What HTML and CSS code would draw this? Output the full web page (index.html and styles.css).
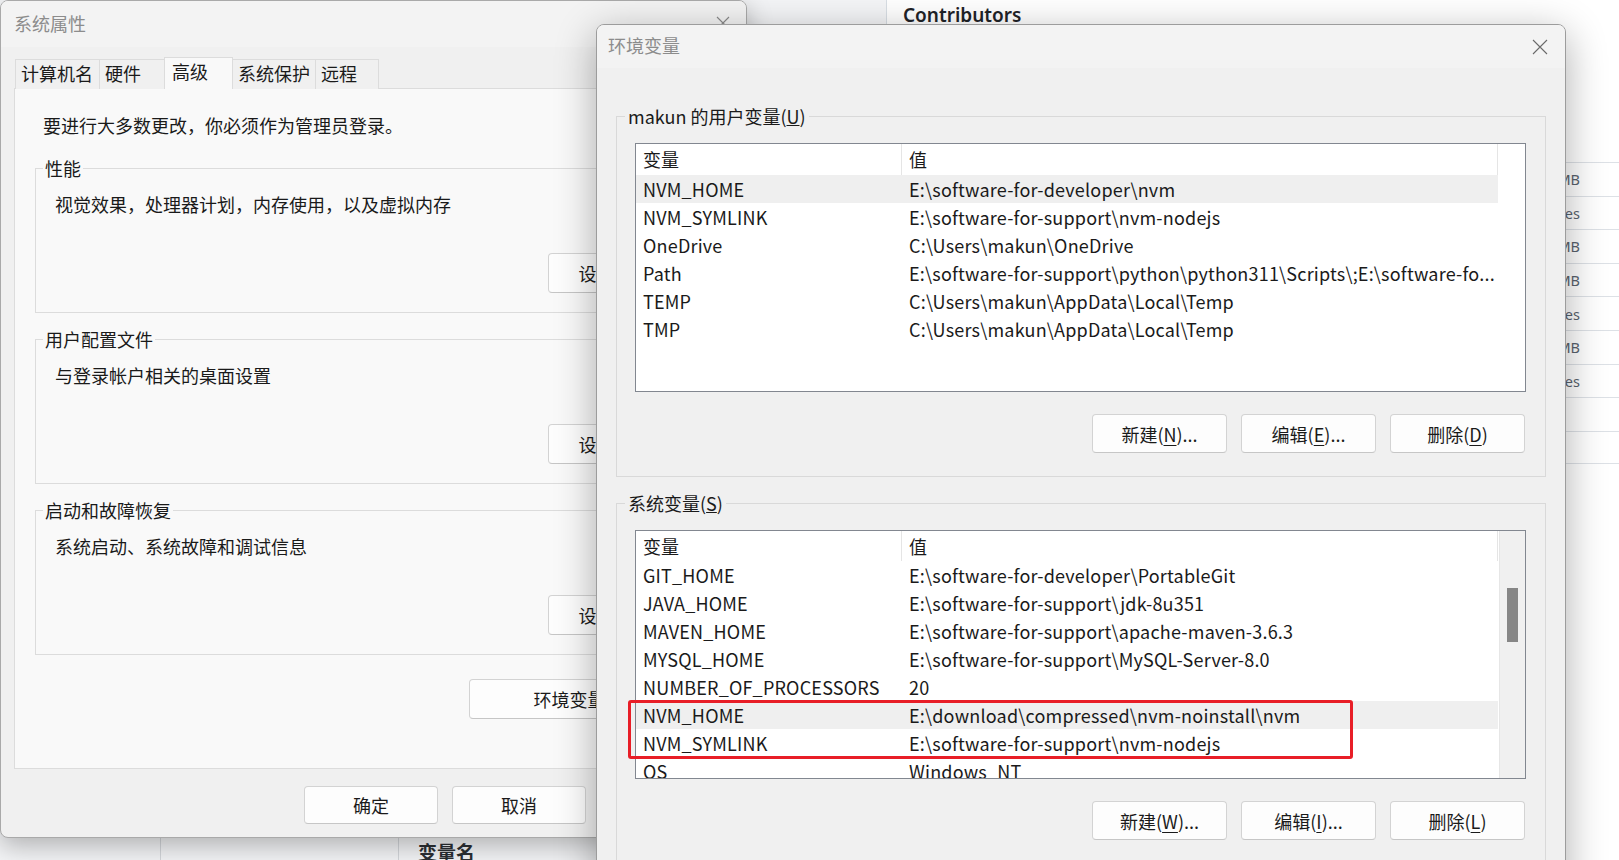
FILE: index.html
```html
<!DOCTYPE html>
<html lang="zh-CN">
<head>
<meta charset="utf-8">
<title>环境变量</title>
<link rel="stylesheet" href="styles.css">
</head>
<body>
<div class="bg">
  <div class="bg-main">
    <div class="thead">
      <div class="th th-1"></div>
      <div class="th th-2"></div>
      <div class="th th-3">变量名</div>
    </div>
  </div>
  <div class="bg-side">
    <h2 class="side-title">Contributors</h2>
    <div class="files">
      <div class="file-row">12.4 MB</div>
      <div class="file-row">812 bytes</div>
      <div class="file-row">3.1 MB</div>
      <div class="file-row">45.8 MB</div>
      <div class="file-row">276 bytes</div>
      <div class="file-row">7.9 MB</div>
      <div class="file-row">530 bytes</div>
      <div class="file-row"></div>
      <div class="file-row"></div>
    </div>
  </div>
</div>

<div class="win win-sys">
  <div class="titlebar">
    <span class="title">系统属性</span>
    <svg class="close" width="14" height="14" viewBox="0 0 14 14"><path d="M1 1 L13 13 M13 1 L1 13" stroke="#8a8a8a" stroke-width="1.1" fill="none"/></svg>
  </div>
  <div class="sys-body">
    <div class="tabs">
      <div class="tab tab-w1">计算机名</div>
      <div class="tab tab-w2">硬件</div>
      <div class="tab tab-w3 active">高级</div>
      <div class="tab tab-w4">系统保护</div>
      <div class="tab tab-w5">远程</div>
    </div>
    <div class="tabpanel">
      <p class="notice">要进行大多数更改，你必须作为管理员登录。</p>
      <div class="group">
        <span class="legend">性能</span>
        <p class="desc">视觉效果，处理器计划，内存使用，以及虚拟内存</p>
        <button class="btn btn-set">设置(<u>S</u>)...</button>
      </div>
      <div class="group">
        <span class="legend">用户配置文件</span>
        <p class="desc">与登录帐户相关的桌面设置</p>
        <button class="btn btn-set">设置(<u>E</u>)...</button>
      </div>
      <div class="group">
        <span class="legend">启动和故障恢复</span>
        <p class="desc">系统启动、系统故障和调试信息</p>
        <button class="btn btn-set">设置(<u>T</u>)...</button>
      </div>
      <div class="env-row">
        <button class="btn btn-env">环境变量(<u>N</u>)...</button>
      </div>
    </div>
    <div class="dlg-buttons">
      <button class="btn btn-dlg">确定</button>
      <button class="btn btn-dlg">取消</button>
      <button class="btn btn-dlg">应用(<u>A</u>)</button>
    </div>
  </div>
</div>

<div class="win win-env">
  <div class="titlebar env-titlebar">
    <span class="title">环境变量</span>
    <svg class="close" width="16" height="16" viewBox="0 0 16 16"><path d="M1 1 L15 15 M15 1 L1 15" stroke="#6a6a6a" stroke-width="1.1" fill="none"/></svg>
  </div>
  <div class="env-body">
    <div class="egroup">
      <span class="legend elegend">makun 的用户变量(<u>U</u>)</span>
      <div class="lv lv-user">
        <div class="lv-main">
          <div class="lv-head">
            <div class="hc c1">变量</div>
            <div class="hc c2">值</div>
          </div>
          <div class="lv-rows">
            <div class="row sel"><div class="c c1">NVM_HOME</div><div class="c c2">E:\software-for-developer\nvm</div></div>
            <div class="row"><div class="c c1">NVM_SYMLINK</div><div class="c c2">E:\software-for-support\nvm-nodejs</div></div>
            <div class="row"><div class="c c1">OneDrive</div><div class="c c2">C:\Users\makun\OneDrive</div></div>
            <div class="row"><div class="c c1">Path</div><div class="c c2">E:\software-for-support\python\python311\Scripts\;E:\software-fo...</div></div>
            <div class="row"><div class="c c1">TEMP</div><div class="c c2">C:\Users\makun\AppData\Local\Temp</div></div>
            <div class="row"><div class="c c1">TMP</div><div class="c c2">C:\Users\makun\AppData\Local\Temp</div></div>
          </div>
        </div>
      </div>
      <div class="ebuttons">
        <button class="btn btn-env2">新建(<u>N</u>)...</button>
        <button class="btn btn-env2">编辑(<u>E</u>)...</button>
        <button class="btn btn-env2">删除(<u>D</u>)</button>
      </div>
    </div>

    <div class="egroup egroup-sys">
      <span class="legend elegend">系统变量(<u>S</u>)</span>
      <div class="lv lv-sys">
        <div class="lv-main">
          <div class="lv-head">
            <div class="hc c1">变量</div>
            <div class="hc c2">值</div>
          </div>
          <div class="lv-rows">
            <div class="row"><div class="c c1">GIT_HOME</div><div class="c c2">E:\software-for-developer\PortableGit</div></div>
            <div class="row"><div class="c c1">JAVA_HOME</div><div class="c c2">E:\software-for-support\jdk-8u351</div></div>
            <div class="row"><div class="c c1">MAVEN_HOME</div><div class="c c2">E:\software-for-support\apache-maven-3.6.3</div></div>
            <div class="row"><div class="c c1">MYSQL_HOME</div><div class="c c2">E:\software-for-support\MySQL-Server-8.0</div></div>
            <div class="row"><div class="c c1">NUMBER_OF_PROCESSORS</div><div class="c c2">20</div></div>
            <div class="row sel"><div class="c c1">NVM_HOME</div><div class="c c2">E:\download\compressed\nvm-noinstall\nvm</div></div>
            <div class="row"><div class="c c1">NVM_SYMLINK</div><div class="c c2">E:\software-for-support\nvm-nodejs</div></div>
            <div class="row"><div class="c c1">OS</div><div class="c c2">Windows_NT</div></div>
          </div>
        </div>
        <div class="vscroll"><div class="thumb"></div></div>
        <div class="mark"></div>
      </div>
      <div class="ebuttons">
        <button class="btn btn-env2">新建(<u>W</u>)...</button>
        <button class="btn btn-env2">编辑(<u>I</u>)...</button>
        <button class="btn btn-env2">删除(<u>L</u>)</button>
      </div>
    </div>
  </div>
</div>
</body>
</html>
```

FILE: styles.css
```css
* { box-sizing: border-box; }

body {
  margin: 0;
  width: 1619px;
  height: 860px;
  overflow: hidden;
  position: relative;
  background: #ffffff;
  font-family: "Noto Sans CJK SC", "Microsoft YaHei", sans-serif;
  font-size: 18px;
  color: #1a1a1a;
}

/* ---------- background page ---------- */
.bg {
  display: flex;
  height: 880px;
}
.bg-main {
  width: 886px;
  display: flex;
  flex-direction: column;
  justify-content: flex-end;
  background: #f4f5f7;
}
.thead {
  height: 50px;
  display: flex;
  background: #f3f4f6;
}
.th {
  height: 100%;
  border-right: 1px solid #d3d6da;
  padding: 10px 0 0 19px;
  font-weight: 700;
  font-size: 19px;
  line-height: 24px;
  color: #2b2f33;
}
.th-1 { width: 161px; }
.th-2 { width: 238px; }
.th-3 { flex: 1; border-right: none; }

.bg-side {
  flex: 1;
  border-left: 1px solid #d8dee4;
  padding-left: 16px;
  background: #fff;
}
.side-title {
  margin: 0;
  font-family: "Noto Sans", sans-serif;
  font-weight: 600;
  font-size: 19px;
  line-height: 30px;
  color: #1f2328;
}
.files {
  margin-top: 132px;
}
.file-row {
  height: 33.6px;
  border-top: 1px solid #dde1e6;
  display: flex;
  align-items: center;
  justify-content: flex-end;
  padding-right: 39px;
  font-family: "Noto Sans", sans-serif;
  font-size: 14.5px;
  color: #59636e;
}
.file-row:last-child { border-bottom: 1px solid #dde1e6; }

/* ---------- windows ---------- */
.win {
  position: absolute;
  border: 1px solid #a9a9a9;
  border-radius: 8px;
  background: #f0f0f0;
  overflow: hidden;
}
.win-sys {
  left: 0;
  top: 0;
  width: 747px;
  height: 838px;
  box-shadow: 0 8px 26px rgba(0, 0, 0, 0.28);
}
.win-env {
  left: 596px;
  top: 24px;
  width: 970px;
  height: 900px;
  border-color: #9c9c9c;
  box-shadow: 0 10px 40px rgba(0, 0, 0, 0.32);
}

.titlebar {
  height: 46px;
  background: #f3f3f3;
  display: flex;
  align-items: center;
  justify-content: space-between;
  padding: 0 16px 0 13px;
}
.title {
  color: #8c8c8c;
  line-height: 44px;
  margin-top: -2px;
}
.close { display: block; margin-top: -3px; }
.env-titlebar {
  height: 43px;
  padding: 0 17px 0 11px;
}
.env-titlebar .title { line-height: 41px; }
.env-titlebar .close { margin-top: 0; }

/* ---------- system properties ---------- */
.sys-body {
  padding: 10px 12px 0 13px;
}
.tabs {
  display: flex;
  align-items: flex-end;
  height: 32px;
  padding-left: 1px;
  position: relative;
  z-index: 1;
  margin-bottom: -1px;
}
.tab {
  height: 30px;
  padding-left: 5px;
  line-height: 27px;
  border: 1px solid #dcdcdc;
  border-bottom: none;
  margin-right: -1px;
  background: #f0f0f0;
  white-space: nowrap;
}
.tab.active {
  height: 32px;
  line-height: 27px;
  padding-left: 7px;
  background: #f9f9f9;
  position: relative;
  z-index: 2;
}
.tab-w1 { width: 85px; }
.tab-w2 { width: 66px; }
.tab-w3 { width: 69px; }
.tab-w4 { width: 84px; }
.tab-w5 { width: 64px; }

.tabpanel {
  width: 720px;
  height: 681px;
  background: #f9f9f9;
  border: 1px solid #dcdcdc;
  padding: 0 0 0 20px;
  display: flex;
  flex-direction: column;
}
.notice {
  margin: 24px 0 0 8px;
  line-height: 24px;
}
.group {
  width: 676px;
  height: 145px;
  border: 1px solid #dcdcdc;
  display: flex;
  flex-direction: column;
  align-items: flex-start;
  margin-top: 26px;
  padding: 0 0 0 19px;
}
.notice + .group { margin-top: 31px; }
.legend {
  margin: -13px 0 0 -12px;
  padding: 0 2px;
  line-height: 24px;
  background: #f9f9f9;
}
.desc {
  margin: 12px 0 0 0;
  line-height: 24px;
}
.btn {
  font-family: inherit;
  font-size: 18px;
  color: #1a1a1a;
  background: #fdfdfd;
  border: 1px solid #d3d3d3;
  border-bottom-color: #c6c6c6;
  border-radius: 4px;
  padding: 0;
  white-space: nowrap;
}
.btn u { text-underline-offset: 3px; text-decoration-thickness: 1px; }
.btn-set {
  width: 135px;
  height: 40px;
  margin: 37px 0 0 493px;
}
.env-row {
  margin-top: 24px;
  padding-left: 434px;
}
.btn-env {
  width: 241px;
  height: 40px;
}
.dlg-buttons {
  display: flex;
  gap: 14px;
  margin-top: 17px;
  padding-left: 290px;
}
.btn-dlg {
  width: 134px;
  height: 38px;
}

/* ---------- environment variables ---------- */
.env-body {
  padding: 48px 19px 0;
}
.egroup {
  height: 361px;
  border: 1px solid #d9d9d9;
  display: flex;
  flex-direction: column;
  align-items: flex-start;
  padding: 0 19px 0 18px;
}
.egroup-sys {
  margin-top: 26px;
  height: 400px;
}
.elegend {
  margin: -13px 0 0 -10px;
  padding: 0 3px;
  background: #f0f0f0;
}
.lv {
  margin-top: 15px;
  width: 891px;
  height: 249px;
  border: 1px solid #828790;
  background: #fff;
  display: flex;
  position: relative;
}
.egroup-sys .lv {
  margin-top: 15px;
  height: 249px;
}
.lv-main {
  flex: 1;
  overflow: hidden;
}
.lv-head {
  display: flex;
  height: 30px;
  width: 862px;
}
.lv-user .lv-head { height: 31px; }
.hc {
  line-height: 30px;
  padding-left: 7px;
  border-right: 1px solid #e5e5e5;
}
.c1 { width: 266px; flex: none; }
.c2 { width: 596px; flex: none; }
.lv-rows {
  width: 862px;
}
.row {
  display: flex;
  height: 28px;
  line-height: 28px;
}
.row.sel { background: #efefef; }
.c {
  padding: 0 8px 0 7px;
  white-space: nowrap;
  overflow: hidden;
  letter-spacing: 0.2px;
}
.vscroll {
  width: 26px;
  background: #f0f0f0;
  border-left: 1px solid #e6e6e6;
  padding: 57px 0 0 7px;
}
.thumb {
  width: 11px;
  height: 54px;
  background: #868686;
}
.mark {
  position: absolute;
  left: -8px;
  top: 169px;
  width: 725px;
  height: 59px;
  border: 3px solid #e81e27;
  border-radius: 3px;
  pointer-events: none;
}
.ebuttons {
  align-self: flex-end;
  display: flex;
  gap: 14px;
  margin-top: 22px;
  margin-right: 1px;
}
.btn-env2 {
  width: 135px;
  height: 39px;
}
```
